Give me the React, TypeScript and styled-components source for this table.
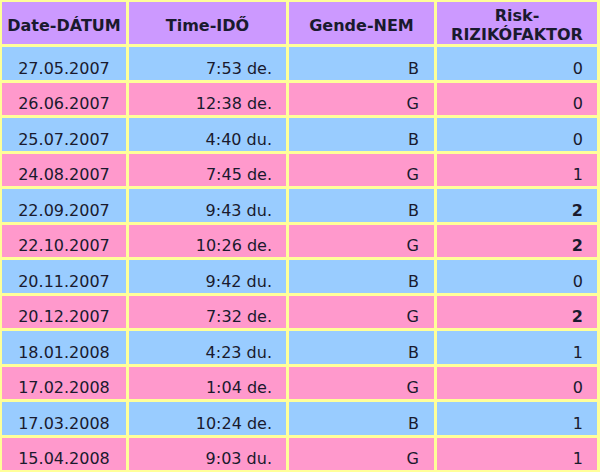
import styled, { createGlobalStyle } from 'styled-components';

const GlobalStyle = createGlobalStyle`
  html, body {
    margin: 0;
    padding: 0;
    background: #ffff99;
  }
  body {
    font-family: "DejaVu Sans", Verdana, sans-serif;
  }
`;

type Tone = 'head' | 'blue' | 'pink';
type Align = 'center' | 'right';

const TONES: Record<Tone, string> = {
  head: '#cc99ff',
  blue: '#99ccff',
  pink: '#ff99cc',
};

const ROWS = [
  { date: '27.05.2007', time: '7:53 de.', gender: 'B', risk: '0' },
  { date: '26.06.2007', time: '12:38 de.', gender: 'G', risk: '0' },
  { date: '25.07.2007', time: '4:40 du.', gender: 'B', risk: '0' },
  { date: '24.08.2007', time: '7:45 de.', gender: 'G', risk: '1' },
  { date: '22.09.2007', time: '9:43 du.', gender: 'B', risk: '2' },
  { date: '22.10.2007', time: '10:26 de.', gender: 'G', risk: '2' },
  { date: '20.11.2007', time: '9:42 du.', gender: 'B', risk: '0' },
  { date: '20.12.2007', time: '7:32 de.', gender: 'G', risk: '2' },
  { date: '18.01.2008', time: '4:23 du.', gender: 'B', risk: '1' },
  { date: '17.02.2008', time: '1:04 de.', gender: 'G', risk: '0' },
  { date: '17.03.2008', time: '10:24 de.', gender: 'B', risk: '1' },
  { date: '15.04.2008', time: '9:03 du.', gender: 'G', risk: '1' },
];

export default function App() {
  return (
    <>
      <GlobalStyle />
      <Table>
        <HeadCell>Date-DÁTUM</HeadCell>
        <HeadCell>Time-IDŐ</HeadCell>
        <HeadCell>Gende-NEM</HeadCell>
        <HeadCell>
          Risk-
          <br />
          RIZIKÓFAKTOR
        </HeadCell>
        {ROWS.map((row, i) => {
          const tone: Tone = i % 2 === 0 ? 'blue' : 'pink';
          const strong = row.risk === '2';
          return [
            <Cell key={`d${i}`} $tone={tone} $align="center">
              {row.date}
            </Cell>,
            <Cell key={`t${i}`} $tone={tone} $align="right">
              {row.time}
            </Cell>,
            <Cell key={`g${i}`} $tone={tone} $align="right" $pad={15}>
              {row.gender}
            </Cell>,
            <Cell key={`r${i}`} $tone={tone} $align="right" $bold={strong}>
              {row.risk}
            </Cell>,
          ];
        })}
      </Table>
    </>
  );
}

const Table = styled.div`
  display: grid;
  grid-template-columns: 124px 157px 145px 160px;
  grid-template-rows: 42px repeat(12, 32.5px);
  gap: 3px;
  padding: 2px 3px 2px 2px;
  width: 600px;
  height: 472px;
  box-sizing: border-box;
  background: #ffff99;
  color: #1a1a2e;
`;

const HeadCell = styled.div`
  display: flex;
  align-items: center;
  justify-content: center;
  padding-top: 4px;
  text-align: center;
  background: ${TONES.head};
  font-weight: bold;
  font-size: 16px;
  line-height: 19px;
`;

const Cell = styled.div<{ $tone: Tone; $align: Align; $pad?: number; $bold?: boolean }>`
  display: flex;
  align-items: center;
  justify-content: ${p => (p.$align === 'center' ? 'center' : 'flex-end')};
  padding: 10px ${p => (p.$align === 'center' ? 0 : p.$pad ?? 14)}px 0 0;
  background: ${p => TONES[p.$tone]};
  font-size: 16px;
  font-weight: ${p => (p.$bold ? 'bold' : 'normal')};
  white-space: nowrap;
`;
